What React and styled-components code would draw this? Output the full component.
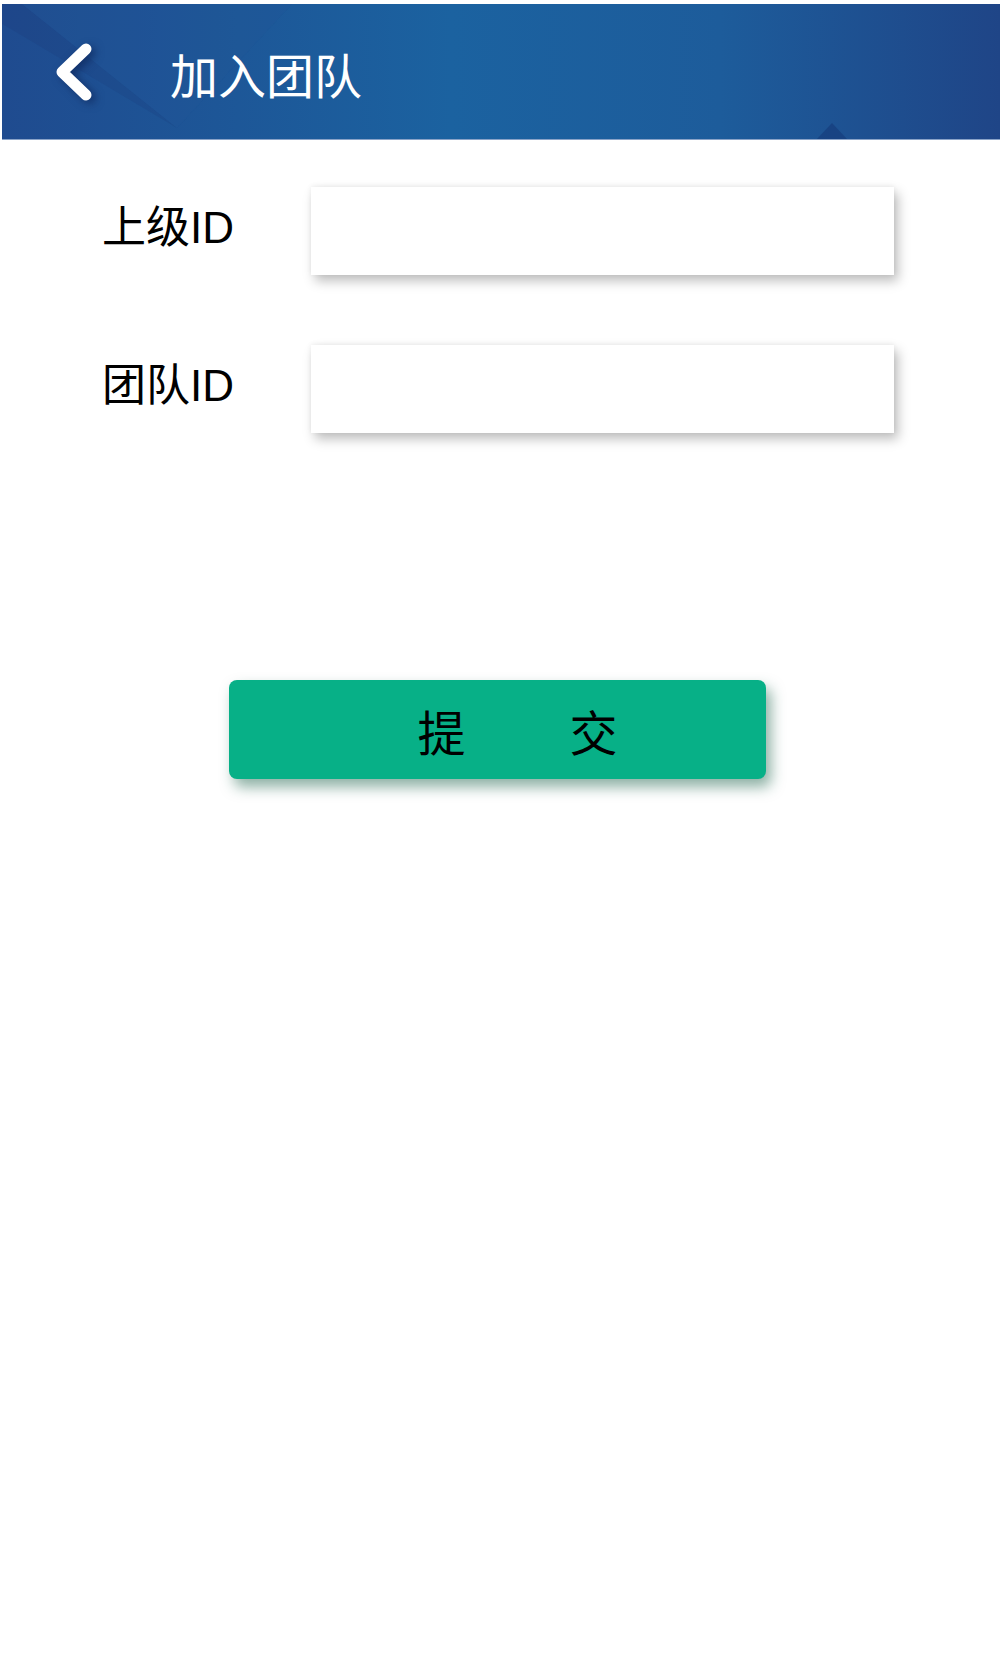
import React from 'react'
import styled, { createGlobalStyle } from 'styled-components'

const GlobalStyle = createGlobalStyle`
  body {
    margin: 0;
    background: #ffffff;
    font-family: "Liberation Sans", "Noto Sans CJK SC", sans-serif;
  }
`

function HeaderArt() {
  return (
    <Art viewBox="0 0 998 136" preserveAspectRatio="none">
      <defs>
        <linearGradient id="bg" x1="0" y1="0" x2="1" y2="0">
          <stop offset="0" stopColor="#1f4b8f" />
          <stop offset="0.45" stopColor="#1b62a0" />
          <stop offset="0.72" stopColor="#1d5c9b" />
          <stop offset="1" stopColor="#1f4587" />
        </linearGradient>
      </defs>
      <rect width="998" height="136" fill="url(#bg)" />
      <polygon points="0,0 290,0 175,125 0,20" fill="#1a2f6e" opacity="0.16" />
      <polygon points="20,0 290,0 175,125" fill="#2a78b8" opacity="0.16" />
      <polygon points="815,136 830,120 845,136" fill="#17407f" opacity="0.8" />
    </Art>
  )
}

function App() {
  return (
    <Page>
      <GlobalStyle />
      <Header>
        <HeaderArt />
        <Back viewBox="0 0 40 60">
          <polyline points="32,7 8,30 32,53" />
        </Back>
        <Title>加入团队</Title>
      </Header>

      <Form>
        <Row>
          <Label>上级ID</Label>
          <Input />
        </Row>
        <Row>
          <Label>团队ID</Label>
          <Input />
        </Row>
      </Form>

      <Submit>
        <span>提</span>
        <span>交</span>
      </Submit>
    </Page>
  )
}

export default App

const Page = styled.div`
  min-height: 100vh;
  display: flex;
  flex-direction: column;
  align-items: flex-start;
`
const Header = styled.div`
  position: relative;
  align-self: stretch;
  margin: 4px 0 0 2px;
  height: 136px;
  display: flex;
  align-items: center;
  padding-left: 52px;
  overflow: hidden;
  border-bottom: 1px solid #8aa3c8;
  box-sizing: border-box;
`
const Art = styled.svg`
  position: absolute;
  left: 0;
  top: 0;
  width: 100%;
  height: 100%;
  z-index: 0;
`
const Back = styled.svg`
  position: relative;
  z-index: 1;
  width: 40px;
  height: 60px;
  fill: none;
  stroke: #ffffff;
  stroke-width: 11;
  stroke-linecap: round;
  stroke-linejoin: round;
  filter: drop-shadow(4px 3px 4px rgba(10, 30, 80, 0.6));
`
const Title = styled.h1`
  position: relative;
  z-index: 1;
  margin: 2px 0 0 76px;
  font-size: 48px;
  font-weight: 400;
  color: #ffffff;
  font-family: "Noto Sans CJK SC", sans-serif;
  line-height: 1;
`
const Form = styled.div`
  display: flex;
  flex-direction: column;
  gap: 70px;
  padding: 47px 0 0 102px;
`
const Row = styled.div`
  display: flex;
  align-items: center;
`
const Label = styled.div`
  width: 209px;
  font-size: 44px;
  color: #000000;
  line-height: 1;
  margin-top: -6px;
`
const Input = styled.input`
  width: 583px;
  height: 88px;
  border: none;
  outline: none;
  box-sizing: border-box;
  background: #ffffff;
  box-shadow: 4px 6px 11px rgba(0, 0, 0, 0.26), 0 -1px 5px rgba(0, 0, 0, 0.06);
  font-size: 36px;
  padding: 0 16px;
`
const Submit = styled.button`
  display: flex;
  justify-content: center;
  align-items: center;
  gap: 104px;
  margin: 247px 0 0 229px;
  width: 537px;
  height: 99px;
  padding: 0 0 0 40px;
  border: none;
  border-radius: 8px;
  background: #07b087;
  box-shadow: 5px 8px 14px rgba(30, 100, 75, 0.5);
  color: #000000;
  font-size: 48px;
  font-family: "Noto Sans CJK SC", sans-serif;
  line-height: 1;
`
